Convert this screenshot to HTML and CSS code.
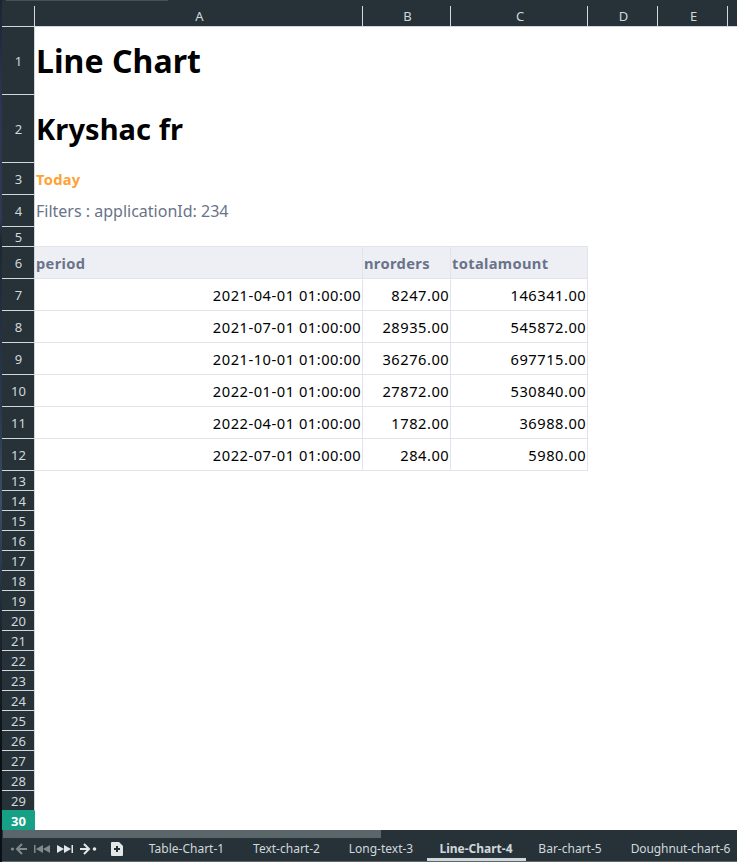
FILE: index.html
```html
<!DOCTYPE html>
<html lang="en">
<head>
<meta charset="utf-8">
<title>Line-Chart-4</title>
<link rel="stylesheet" href="styles.css">
</head>
<body>
<div class="app">
  <div class="edge"></div>
  <main class="main">
    <div class="top"><div class="topbar"></div></div>
    <div class="cols">
      <span class="corner"></span><span class="a">A</span><span class="b">B</span><span class="c">C</span><span class="d">D</span><span class="d">E</span><span class="rest"></span>
    </div>
    <div class="sheet">
      <div class="row big"><b>1</b><h1>Line Chart</h1></div>
      <div class="row big"><b>2</b><h2>Kryshac fr</h2></div>
      <div class="row mid"><b>3</b><p class="today">Today</p></div>
      <div class="row mid"><b>4</b><p class="filters">Filters : applicationId: 234</p></div>
      <div class="row before"><b>5</b><span class="blank"></span></div>
      <div class="row mid data head"><b>6</b><span class="a">period</span><span class="b">nrorders</span><span class="c">totalamount</span></div>
      <div class="row mid data"><b>7</b><span class="a">2021-04-01 01:00:00</span><span class="b">8247.00</span><span class="c">146341.00</span></div>
      <div class="row mid data"><b>8</b><span class="a">2021-07-01 01:00:00</span><span class="b">28935.00</span><span class="c">545872.00</span></div>
      <div class="row mid data"><b>9</b><span class="a">2021-10-01 01:00:00</span><span class="b">36276.00</span><span class="c">697715.00</span></div>
      <div class="row mid data"><b>10</b><span class="a">2022-01-01 01:00:00</span><span class="b">27872.00</span><span class="c">530840.00</span></div>
      <div class="row mid data"><b>11</b><span class="a">2022-04-01 01:00:00</span><span class="b">1782.00</span><span class="c">36988.00</span></div>
      <div class="row mid data"><b>12</b><span class="a">2022-07-01 01:00:00</span><span class="b">284.00</span><span class="c">5980.00</span></div>
      <div class="row"><b>13</b></div>
      <div class="row"><b>14</b></div>
      <div class="row"><b>15</b></div>
      <div class="row"><b>16</b></div>
      <div class="row"><b>17</b></div>
      <div class="row"><b>18</b></div>
      <div class="row"><b>19</b></div>
      <div class="row"><b>20</b></div>
      <div class="row"><b>21</b></div>
      <div class="row"><b>22</b></div>
      <div class="row"><b>23</b></div>
      <div class="row"><b>24</b></div>
      <div class="row"><b>25</b></div>
      <div class="row"><b>26</b></div>
      <div class="row"><b>27</b></div>
      <div class="row"><b>28</b></div>
      <div class="row last"><b>29</b></div>
      <div class="row current"><b>30</b></div>
    </div>
    <div class="scroll"><div class="thumb"></div></div>
    <nav class="tabs">
      <svg class="nav" width="124" height="22" viewBox="0 0 124 22">
        <g fill="none" stroke="#82898c" stroke-width="2"><path d="M25 11H15.500M20 6l-5 5 5 5"/></g>
        <circle cx="10.500" cy="11" r="1.600" fill="#82898c"/>
        <path d="M32 7h1.500v8H32zM41 7v8l-7-4zM48 7v8l-7-4z" fill="#82898c"/>
        <path d="M69.500 7H71v8h-1.500zM55 7v8l7-4zM62 7v8l7-4z" fill="#e4e7e8"/>
        <g fill="none" stroke="#e4e7e8" stroke-width="2"><path d="M78 11h9M82 6l5 5-5 5"/></g>
        <circle cx="92.500" cy="11" r="1.800" fill="#e4e7e8"/>
        <path d="M110 4h7l4 4v9q0 1-1 1h-10q-1 0-1-1V5q0-1 1-1z" fill="#e4e7e8"/>
        <path d="M112 11h6M115 8v6" stroke="#273238" stroke-width="2"/>
      </svg>
      <span class="tab t1">Table-Chart-1</span><span class="tab t2">Text-chart-2</span><span class="tab t3">Long-text-3</span><span class="tab t4">Line-Chart-4</span><span class="tab t5">Bar-chart-5</span><span class="tab t6">Doughnut-chart-6</span>
    </nav>
    <div class="foot"></div>
  </main>
</div>
</body>
</html>
```
FILE: styles.css
```css
* { box-sizing: border-box; }
body { margin: 0; overflow: hidden; font-family: "Noto Sans", sans-serif; background: #fff; }
.app { display: flex; width: 737px; height: 862px; }
.edge { width: 2px; background: linear-gradient(#1c2333 0, #2e3552 100px, #303852 220px, #1d2733 240px, #2b3a50 420px, #3c5068 500px, #1d2733 620px, #0a1015 760px, #0a1015); }
.main { width: 735px; display: flex; flex-direction: column; }
.top { height: 6px; background: #273238; padding-left: 4px; }
.topbar { width: 162px; height: 1px; background: #465157; }
.cols { height: 21px; display: flex; background: #273238; color: #cfd8dc; border-bottom: 1px solid #cfd8dc; font-size: 13px; line-height: 21px; text-align: center; }
.cols span { border-right: 1px solid #cfd8dc; padding-left: 2px; }
.cols .rest { border: 0; }
.corner { width: 33px; }
.a { width: 328px; }
.b { width: 88px; }
.c { width: 137px; }
.d { width: 70px; }
.sheet { height: 803px; background: #fff; }
.row { height: 20px; display: flex; }
.big { height: 68px; }
.mid { height: 32px; }
.row > b { width: 33px; flex: none; display: flex; align-items: center; justify-content: center; background: #273238; color: #cfd8dc; border-right: 1px solid #cfd8dc; border-bottom: 1px solid #cfd8dc; font-size: 13px; font-weight: 400; line-height: 18px; padding: 1px 0 0 1px; }
.row.last > b { border-bottom-color: #16a085; }
.row.current > b { background: #16a085; border-color: #16a085; color: #fff; font-weight: 700; }
h1, h2, p { margin: 0; padding-left: 1px; color: #000; white-space: pre; }
h1 { font-size: 32px; line-height: 68px; letter-spacing: .06px; }
h2 { font-size: 29px; line-height: 68px; letter-spacing: .08px; }
.today { color: #ffa133; font-size: 14.67px; font-weight: 700; line-height: 33px; letter-spacing: .3px; }
.filters { color: #697389; font-size: 16px; line-height: 32px; }
.blank { width: 553px; border-bottom: 1px solid #e2e3ed; }
.data span { border-right: 1px solid #e2e3ed; border-bottom: 1px solid #e2e3ed; padding: 0 .8px 0 1px; line-height: 33px; font-size: 14.67px; letter-spacing: .52px; text-align: right; white-space: pre; color: #000; }
.data.head span { background: #eeeff5; color: #697389; font-weight: 700; letter-spacing: .34px; text-align: left; }
.scroll { height: 8px; background: #273238; padding-left: 1px; }
.thumb { width: 378px; height: 8px; background: #5b666a; }
.tabs { height: 23px; display: flex; background: #273238; color: #cfd8dc; font-size: 12px; line-height: 21px; white-space: pre; }
.nav { flex: none; }
.tab { flex: none; text-align: center; }
.t1 { width: 121px; }
.t2 { width: 79px; }
.t3 { width: 101px; padding-left: 9px; }
.t4 { width: 99px; padding-right: 1px; font-weight: 700; border-bottom: 3px solid #cfd8dc; }
.t5 { width: 88px; }
.t6 { width: 133px; letter-spacing: -.1px; }
.foot { height: 1px; background: #5b666a; }
```
